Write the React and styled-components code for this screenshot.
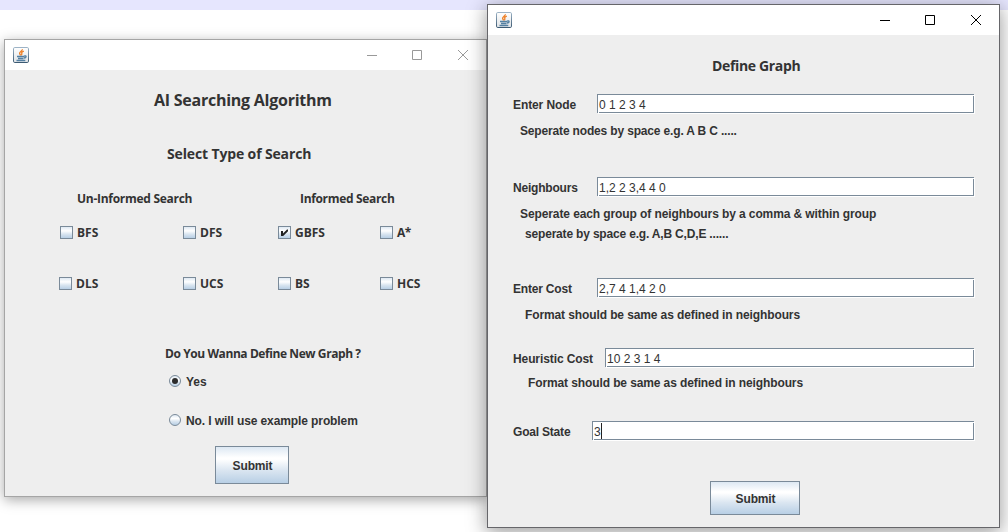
import React from "react";
import styled, { createGlobalStyle } from "styled-components";

const Global = createGlobalStyle`
  html, body { margin: 0; padding: 0; height: 100%; overflow: hidden; }
  * { box-sizing: border-box; }
`;

const arial = `"Liberation Sans", Arial, sans-serif`;
const segoe = `"Open Sans", "Noto Sans", sans-serif`;

const Desktop = styled.main`
  position: relative;
  width: 1008px;
  height: 532px;
  overflow: hidden;
  background: linear-gradient(#e6e6fe 10px, #fff 10px);
  color: #333;
  font: bold 12px ${arial};
`;

const Window = styled.section`
  position: absolute;
  left: ${(p) => p.$x}px;
  top: ${(p) => p.$y}px;
  width: ${(p) => p.$w}px;
  height: ${(p) => p.$h}px;
  display: flex;
  flex-direction: column;
  border: 1px solid ${(p) => (p.$active ? "#66666a" : "#a5a5a5")};
  box-shadow: ${(p) =>
    p.$active ? "0 4px 18px 1px rgba(0,0,0,.38)" : "0 3px 12px 0 rgba(0,0,0,.34)"};
  background: #eee;
`;

const TitleBar = styled.header`
  height: 30px;
  flex: none;
  display: flex;
  align-items: center;
  justify-content: space-between;
  padding: 0 17px 1px 8px;
  background: #fff;
`;

const Controls = styled.div`
  display: flex;
  gap: 34px;
  color: ${(p) => (p.$active ? "#000" : "#999")};
  svg { display: block; }
`;

const Content = styled.div`
  flex: 1;
  display: flex;
  flex-direction: column;
`;

const Row = styled.div`
  flex: none;
  display: flex;
  align-items: center;
  height: 20px;
  margin-top: ${(p) => p.$gap || 0}px;
  padding-left: ${(p) => p.$indent || 0}px;
`;

const Text = styled.span`
  flex: none;
  white-space: pre;
  line-height: 20px;
  padding-top: ${(p) => (p.$low ? 2 : 0)}px;
  font-family: ${(p) => (p.$ui ? segoe : arial)};
  font-size: ${(p) => p.$size || 12}px;
  letter-spacing: ${(p) => p.$ls || 0}px;
  width: ${(p) => (p.$w ? `${p.$w}px` : "auto")};
`;

const OptionGrid = styled.div`
  flex: none;
  display: grid;
  grid-template-columns: 123px 95px 102px 90px;
  grid-auto-rows: 20px;
  row-gap: 31px;
  margin: 14px 0 0 55px;
`;

const Option = styled.label`
  display: flex;
  align-items: center;
  gap: ${(p) => p.$gap || 4}px;
  margin-left: ${(p) => p.$shift || 0}px;
`;

const Box = styled.span`
  flex: none;
  display: flex;
  width: 13px;
  height: 13px;
  border: 1px solid #7a8a99;
  background: linear-gradient(#dfe9f3 0, #fff 35%, #d9e5f0 65%, #b8cfe5 100%);
`;

const Dot = styled.span`
  flex: none;
  display: flex;
  align-items: center;
  justify-content: center;
  width: 12px;
  height: 12px;
  border: 1px solid #7a8a99;
  border-radius: 50%;
  background: linear-gradient(#dfe9f3 0, #fff 35%, #d9e5f0 65%, #b8cfe5 100%);
  &::after {
    content: "";
    width: 6px;
    height: 6px;
    border-radius: 50%;
    background: ${(p) => (p.$on ? "#2b2b2b" : "transparent")};
  }
`;

const Button = styled.button`
  flex: none;
  width: ${(p) => p.$w}px;
  height: ${(p) => p.$h}px;
  margin: ${(p) => p.$margin};
  padding: 1px 0 0 1px;
  border: 1px solid #7a8a99;
  background: linear-gradient(#dde8f3 0, #fff 30%, #fff 34%, #dbe6f1 64%, #b8cfe5 100%);
  color: #333;
  font: bold 12px ${arial};
  letter-spacing: -0.15px;
`;

const Field = styled.div`
  position: relative;
  display: flex;
  align-items: center;
  flex: 1;
  height: 19px;
  margin: 0 25px 1px 0;
  padding: 2px 0 0 1px;
  border: 1px solid #7a8a99;
  background: #fff;
  box-shadow: 1px 1px 0 #fff;
  font-weight: normal;
  white-space: pre;
  &::before, &::after {
    content: "";
    position: absolute;
    width: 1px;
    height: 1px;
    background: #fff;
  }
  &::before { left: 0; bottom: -1px; }
  &::after { right: -1px; top: 0; }
`;

const Caret = styled.i`
  width: 1px;
  height: 16px;
  margin-top: -2px;
  background: #222;
`;

const JavaIcon = () => (
  <svg width="16" height="16" viewBox="0 0 16 16">
    <defs>
      <linearGradient id="cup" x1="0" y1="0" x2="0" y2="1">
        <stop offset="0" stopColor="#fff" />
        <stop offset="1" stopColor="#dfe3e6" />
      </linearGradient>
      <linearGradient id="rim" x1="0" y1="0" x2="0" y2="1">
        <stop offset="0" stopColor="#9db3c6" />
        <stop offset="1" stopColor="#3c5a73" />
      </linearGradient>
    </defs>
    <rect x=".5" y=".5" width="15" height="15" rx="1.3" fill="url(#cup)" stroke="url(#rim)" />
    <path d="M9.300 2.200c.6 1.600-3 2.400-2.700 4.200.1.800.9 1.100.9 2M10.800 4.200C8.800 5 8.300 5.500 8.800 6.400c.4.700.1 1.200-.6 1.900" fill="none" stroke="#ee7d22" strokeWidth="1.300" />
    <path d="M4 9.500h7.500M5 11.500h5.500M11.300 8.900c2.400-.6 2.500 1.700-.4 2.300M3.500 13.500h8.800" fill="none" stroke="#5480a2" strokeWidth="1.300" />
  </svg>
);

const Title = ({ active }) => (
  <TitleBar>
    <JavaIcon />
    <Controls $active={active}>
      <svg width="12" height="12" viewBox="0 0 12 12" stroke="currentColor">
        <path d="M1 6.500h10" />
      </svg>
      <svg width="11" height="12" viewBox="0 0 11 12" fill="none" stroke="currentColor">
        <path d="M.5 1.500h9v9h-9z" />
      </svg>
      <svg width="12" height="12" viewBox="0 0 12 12" stroke="currentColor">
        <path d="M1 1l10 10M11 1L1 11" />
      </svg>
    </Controls>
  </TitleBar>
);

const Check = ({ label, on, shift, ls }) => (
  <Option $shift={shift}>
    <Box>
      {on && (
        <svg width="11" height="11" viewBox="0 0 11 11">
          <path d="M2 4h2v2.500L8 2.500h1v1.700L4.200 9H2z" fill="#222" />
        </svg>
      )}
    </Box>
    <Text $ui $low $ls={ls}>{label}</Text>
  </Option>
);

const Radio = ({ label, on, ls }) => (
  <Option $gap={5}>
    <Dot $on={on} />
    <Text $low $ls={ls}>{label}</Text>
  </Option>
);

export default function App() {
  return (
    <Desktop>
      <Global />
      <Window $x={4} $y={39} $w={483} $h={458}>
        <Title />
        <Content>
          <Row $gap={20} $indent={149}><Text $ui $size={16} $ls={-0.25}>AI Searching Algorithm</Text></Row>
          <Row $gap={34} $indent={162}><Text $ui $size={14} $ls={-0.14}>Select Type of Search</Text></Row>
          <Row $gap={24} $indent={72}>
            <Text $ui $low $w={223} $ls={-0.28}>Un-Informed Search</Text>
            <Text $ui $low $ls={-0.33}>Informed Search</Text>
          </Row>
          <OptionGrid>
            <Check label="BFS" />
            <Check label="DFS" />
            <Check label="GBFS" on />
            <Check label="A*" ls={-0.5} />
            <Check label="DLS" shift={-1} />
            <Check label="UCS" />
            <Check label="BS" />
            <Check label="HCS" />
          </OptionGrid>
          <Row $gap={50} $indent={160}><Text $ui $low $ls={-0.42}>Do You Wanna Define New Graph ?</Text></Row>
          <Row $gap={8} $indent={164}><Radio label="Yes" on /></Row>
          <Row $gap={19} $indent={164}><Radio label="No. I will use example problem" ls={-0.1} /></Row>
          <Button $w={74} $h={38} $margin="16px 0 0 210px">Submit</Button>
        </Content>
      </Window>

      <Window $active $x={487} $y={4} $w={513} $h={524}>
        <Title active />
        <Content>
          <Row $gap={21} $indent={224}><Text $ui $size={14} $ls={-0.35}>Define Graph</Text></Row>
          <Row $gap={18} $indent={25}><Text $low $w={84} $ls={-0.1}>Enter Node</Text><Field>0 1 2 3 4</Field></Row>
          <Row $gap={7} $indent={32}><Text $ls={-0.16}>Seperate nodes by space e.g. A B C .....</Text></Row>
          <Row $gap={36} $indent={25}><Text $low $w={84} $ls={-0.2}>Neighbours</Text><Field>1,2 2 3,4 4 0</Field></Row>
          <Row $gap={7} $indent={32}><Text $ls={-0.1}>{"Seperate each group of neighbours by a comma & within group"}</Text></Row>
          <Row $indent={37}><Text $ls={-0.18}>seperate by space e.g. A,B C,D,E ......</Text></Row>
          <Row $gap={34} $indent={25}><Text $low $w={84} $ls={-0.2}>Enter Cost</Text><Field>2,7 4 1,4 2 0</Field></Row>
          <Row $gap={7} $indent={37}><Text $ls={-0.11}>Format should be same as defined in neighbours</Text></Row>
          <Row $gap={23} $indent={25}><Text $low $w={92} $ls={-0.1}>Heuristic Cost</Text><Field>10 2 3 1 4</Field></Row>
          <Row $gap={5} $indent={40}><Text $ls={-0.11}>Format should be same as defined in neighbours</Text></Row>
          <Row $gap={28} $indent={25}><Text $low $w={79} $ls={-0.2}>Goal State</Text><Field>3<Caret /></Field></Row>
          <Button $w={90} $h={34} $margin="40px 0 0 222px">Submit</Button>
        </Content>
      </Window>
    </Desktop>
  );
}
